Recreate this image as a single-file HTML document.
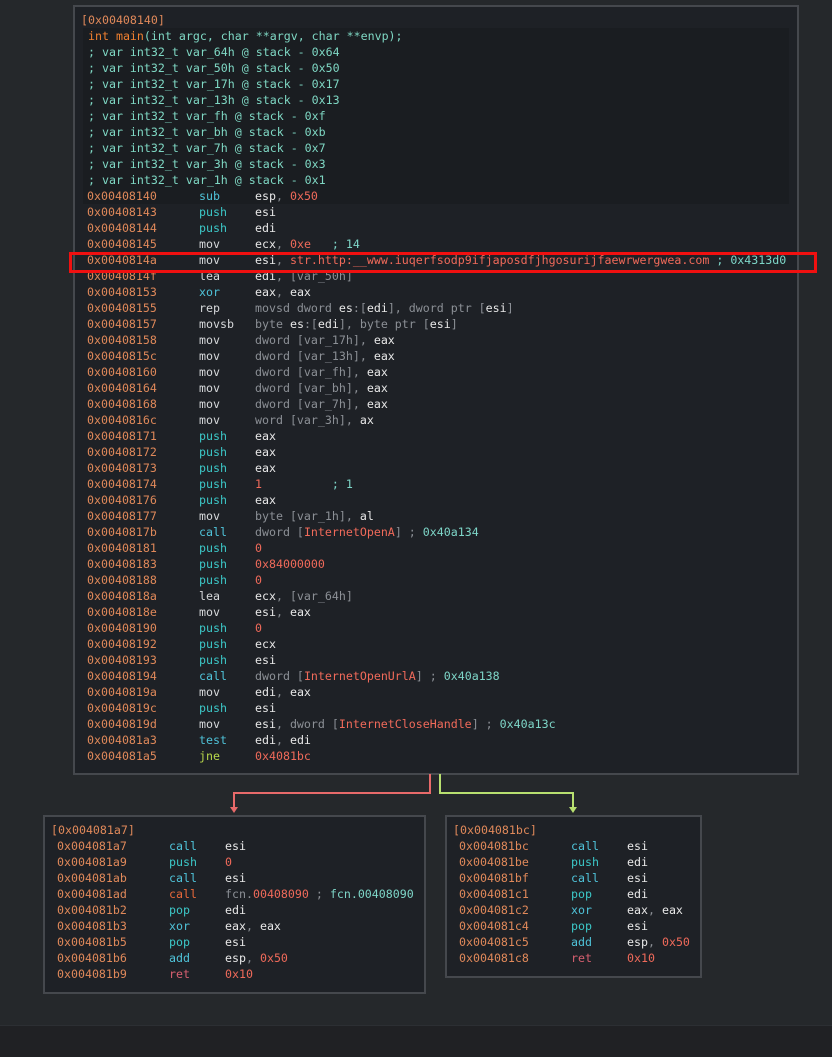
<!DOCTYPE html>
<html><head><meta charset="utf-8"><style>
body{margin:0;width:832px;height:1056px;background:#25282b;position:relative;overflow:hidden;font-family:"DejaVu Sans Mono","Liberation Mono",monospace;font-size:11.62px;}
.box{position:absolute;background:#1e2126;border:2px solid #45484d;box-sizing:border-box;}
.l{position:absolute;height:16px;line-height:16px;white-space:pre;color:#e8e8e8;}
.a{color:#e0895a}.m{color:#d6d8da}.c{color:#4fc3d9}.t{color:#3cc8c8}.r{color:#d86070}.o{color:#e8683a}.g{color:#b8d84a}
.n{color:#f06a5a}.d{color:#8c9096}.k{color:#7ed6c8}.p{color:#e8e8e8}.h{color:#e0895a}
.cm{color:#7fd8c4}.kw{color:#f08030}
</style></head><body>
<div class="box" style="left:73px;top:5px;width:726px;height:770px"></div>
<div style="position:absolute;left:83px;top:28px;width:706px;height:176px;background:#1a1d21"></div>
<div class="box" style="left:43px;top:815px;width:383px;height:179px"></div>
<div class="box" style="left:445px;top:815px;width:257px;height:163px"></div>
<div style="position:absolute;left:429px;top:774px;width:2px;height:20px;background:#e86a6a"></div>
<div style="position:absolute;left:233px;top:792px;width:198px;height:2px;background:#e86a6a"></div>
<div style="position:absolute;left:233px;top:792px;width:2px;height:17px;background:#e86a6a"></div>
<div style="position:absolute;left:230px;top:807px;width:0;height:0;border-left:4px solid transparent;border-right:4px solid transparent;border-top:6px solid #e86a6a"></div>
<div style="position:absolute;left:439px;top:774px;width:2px;height:20px;background:#b8e070"></div>
<div style="position:absolute;left:439px;top:792px;width:135px;height:2px;background:#b8e070"></div>
<div style="position:absolute;left:572px;top:792px;width:2px;height:17px;background:#b8e070"></div>
<div style="position:absolute;left:569px;top:807px;width:0;height:0;border-left:4px solid transparent;border-right:4px solid transparent;border-top:6px solid #b8e070"></div>
<div style="position:absolute;left:0;top:1025px;width:832px;height:31px;background:#202124;border-top:1px solid #2c2f33"></div>

<div class="l h" style="left:81px;top:12px">[0x00408140]</div>
<div class="l" style="left:88px;top:28px"><span class="kw">int main</span><span class="cm">(int argc, char **argv, char **envp);</span></div>
<div class="l cm" style="left:88px;top:44px">; var int32_t var_64h @ stack - 0x64</div>
<div class="l cm" style="left:88px;top:60px">; var int32_t var_50h @ stack - 0x50</div>
<div class="l cm" style="left:88px;top:76px">; var int32_t var_17h @ stack - 0x17</div>
<div class="l cm" style="left:88px;top:92px">; var int32_t var_13h @ stack - 0x13</div>
<div class="l cm" style="left:88px;top:108px">; var int32_t var_fh @ stack - 0xf</div>
<div class="l cm" style="left:88px;top:124px">; var int32_t var_bh @ stack - 0xb</div>
<div class="l cm" style="left:88px;top:140px">; var int32_t var_7h @ stack - 0x7</div>
<div class="l cm" style="left:88px;top:156px">; var int32_t var_3h @ stack - 0x3</div>
<div class="l cm" style="left:88px;top:172px">; var int32_t var_1h @ stack - 0x1</div>

<div style="position:absolute;left:87px;top:188px;">
<div class="l a" style="left:0;top:0">0x00408140</div><div class="l c" style="left:112px;top:0">sub</div><div class="l" style="left:168px;top:0">esp<span class="d">,</span> <span class="n">0x50</span></div>
<div class="l a" style="left:0;top:16px">0x00408143</div><div class="l t" style="left:112px;top:16px">push</div><div class="l" style="left:168px;top:16px">esi</div>
<div class="l a" style="left:0;top:32px">0x00408144</div><div class="l t" style="left:112px;top:32px">push</div><div class="l" style="left:168px;top:32px">edi</div>
<div class="l a" style="left:0;top:48px">0x00408145</div><div class="l m" style="left:112px;top:48px">mov</div><div class="l" style="left:168px;top:48px">ecx<span class="d">,</span> <span class="n">0xe</span>   <span class="k">; 14</span></div>
<div class="l a" style="left:0;top:64px">0x0040814a</div><div class="l m" style="left:112px;top:64px">mov</div><div class="l" style="left:168px;top:64px">esi<span class="d">,</span> <span class="n">str.http:__www.iuqerfsodp9ifjaposdfjhgosurijfaewrwergwea.com</span> <span class="k">; 0x4313d0</span></div>
<div class="l a" style="left:0;top:80px">0x0040814f</div><div class="l m" style="left:112px;top:80px">lea</div><div class="l" style="left:168px;top:80px">edi<span class="d">, [var_50h]</span></div>
<div class="l a" style="left:0;top:96px">0x00408153</div><div class="l c" style="left:112px;top:96px">xor</div><div class="l" style="left:168px;top:96px">eax<span class="d">,</span> eax</div>
<div class="l a" style="left:0;top:112px">0x00408155</div><div class="l m" style="left:112px;top:112px">rep</div><div class="l d" style="left:168px;top:112px">movsd dword <span class="p">es</span>:[<span class="p">edi</span>], dword ptr [<span class="p">esi</span>]</div>
<div class="l a" style="left:0;top:128px">0x00408157</div><div class="l m" style="left:112px;top:128px">movsb</div><div class="l d" style="left:168px;top:128px">byte <span class="p">es</span>:[<span class="p">edi</span>], byte ptr [<span class="p">esi</span>]</div>
<div class="l a" style="left:0;top:144px">0x00408158</div><div class="l m" style="left:112px;top:144px">mov</div><div class="l d" style="left:168px;top:144px">dword [var_17h], <span class="p">eax</span></div>
<div class="l a" style="left:0;top:160px">0x0040815c</div><div class="l m" style="left:112px;top:160px">mov</div><div class="l d" style="left:168px;top:160px">dword [var_13h], <span class="p">eax</span></div>
<div class="l a" style="left:0;top:176px">0x00408160</div><div class="l m" style="left:112px;top:176px">mov</div><div class="l d" style="left:168px;top:176px">dword [var_fh], <span class="p">eax</span></div>
<div class="l a" style="left:0;top:192px">0x00408164</div><div class="l m" style="left:112px;top:192px">mov</div><div class="l d" style="left:168px;top:192px">dword [var_bh], <span class="p">eax</span></div>
<div class="l a" style="left:0;top:208px">0x00408168</div><div class="l m" style="left:112px;top:208px">mov</div><div class="l d" style="left:168px;top:208px">dword [var_7h], <span class="p">eax</span></div>
<div class="l a" style="left:0;top:224px">0x0040816c</div><div class="l m" style="left:112px;top:224px">mov</div><div class="l d" style="left:168px;top:224px">word [var_3h], <span class="p">ax</span></div>
<div class="l a" style="left:0;top:240px">0x00408171</div><div class="l t" style="left:112px;top:240px">push</div><div class="l" style="left:168px;top:240px">eax</div>
<div class="l a" style="left:0;top:256px">0x00408172</div><div class="l t" style="left:112px;top:256px">push</div><div class="l" style="left:168px;top:256px">eax</div>
<div class="l a" style="left:0;top:272px">0x00408173</div><div class="l t" style="left:112px;top:272px">push</div><div class="l" style="left:168px;top:272px">eax</div>
<div class="l a" style="left:0;top:288px">0x00408174</div><div class="l t" style="left:112px;top:288px">push</div><div class="l" style="left:168px;top:288px"><span class="n">1</span>          <span class="k">; 1</span></div>
<div class="l a" style="left:0;top:304px">0x00408176</div><div class="l t" style="left:112px;top:304px">push</div><div class="l" style="left:168px;top:304px">eax</div>
<div class="l a" style="left:0;top:320px">0x00408177</div><div class="l m" style="left:112px;top:320px">mov</div><div class="l d" style="left:168px;top:320px">byte [var_1h], <span class="p">al</span></div>
<div class="l a" style="left:0;top:336px">0x0040817b</div><div class="l c" style="left:112px;top:336px">call</div><div class="l d" style="left:168px;top:336px">dword [<span class="n">InternetOpenA</span>] ; <span class="k">0x40a134</span></div>
<div class="l a" style="left:0;top:352px">0x00408181</div><div class="l t" style="left:112px;top:352px">push</div><div class="l n" style="left:168px;top:352px">0</div>
<div class="l a" style="left:0;top:368px">0x00408183</div><div class="l t" style="left:112px;top:368px">push</div><div class="l n" style="left:168px;top:368px">0x84000000</div>
<div class="l a" style="left:0;top:384px">0x00408188</div><div class="l t" style="left:112px;top:384px">push</div><div class="l n" style="left:168px;top:384px">0</div>
<div class="l a" style="left:0;top:400px">0x0040818a</div><div class="l m" style="left:112px;top:400px">lea</div><div class="l" style="left:168px;top:400px">ecx<span class="d">, [var_64h]</span></div>
<div class="l a" style="left:0;top:416px">0x0040818e</div><div class="l m" style="left:112px;top:416px">mov</div><div class="l" style="left:168px;top:416px">esi<span class="d">,</span> eax</div>
<div class="l a" style="left:0;top:432px">0x00408190</div><div class="l t" style="left:112px;top:432px">push</div><div class="l n" style="left:168px;top:432px">0</div>
<div class="l a" style="left:0;top:448px">0x00408192</div><div class="l t" style="left:112px;top:448px">push</div><div class="l" style="left:168px;top:448px">ecx</div>
<div class="l a" style="left:0;top:464px">0x00408193</div><div class="l t" style="left:112px;top:464px">push</div><div class="l" style="left:168px;top:464px">esi</div>
<div class="l a" style="left:0;top:480px">0x00408194</div><div class="l c" style="left:112px;top:480px">call</div><div class="l d" style="left:168px;top:480px">dword [<span class="n">InternetOpenUrlA</span>] ; <span class="k">0x40a138</span></div>
<div class="l a" style="left:0;top:496px">0x0040819a</div><div class="l m" style="left:112px;top:496px">mov</div><div class="l" style="left:168px;top:496px">edi<span class="d">,</span> eax</div>
<div class="l a" style="left:0;top:512px">0x0040819c</div><div class="l t" style="left:112px;top:512px">push</div><div class="l" style="left:168px;top:512px">esi</div>
<div class="l a" style="left:0;top:528px">0x0040819d</div><div class="l m" style="left:112px;top:528px">mov</div><div class="l" style="left:168px;top:528px">esi<span class="d">, dword [</span><span class="n">InternetCloseHandle</span><span class="d">] ;</span> <span class="k">0x40a13c</span></div>
<div class="l a" style="left:0;top:544px">0x004081a3</div><div class="l c" style="left:112px;top:544px">test</div><div class="l" style="left:168px;top:544px">edi<span class="d">,</span> edi</div>
<div class="l a" style="left:0;top:560px">0x004081a5</div><div class="l g" style="left:112px;top:560px">jne</div><div class="l n" style="left:168px;top:560px">0x4081bc</div>
</div>
<div style="position:absolute;left:69px;top:252px;width:748px;height:21px;border:3px solid #f01010;box-sizing:border-box"></div>

<div class="l h" style="left:51px;top:822px">[0x004081a7]</div>
<div style="position:absolute;left:57px;top:838px">
<div class="l a" style="left:0;top:0">0x004081a7</div><div class="l c" style="left:112px;top:0">call</div><div class="l" style="left:168px;top:0">esi</div>
<div class="l a" style="left:0;top:16px">0x004081a9</div><div class="l t" style="left:112px;top:16px">push</div><div class="l n" style="left:168px;top:16px">0</div>
<div class="l a" style="left:0;top:32px">0x004081ab</div><div class="l c" style="left:112px;top:32px">call</div><div class="l" style="left:168px;top:32px">esi</div>
<div class="l a" style="left:0;top:48px">0x004081ad</div><div class="l o" style="left:112px;top:48px">call</div><div class="l d" style="left:168px;top:48px">fcn.<span class="n">00408090</span> ; <span class="k">fcn.00408090</span></div>
<div class="l a" style="left:0;top:64px">0x004081b2</div><div class="l t" style="left:112px;top:64px">pop</div><div class="l" style="left:168px;top:64px">edi</div>
<div class="l a" style="left:0;top:80px">0x004081b3</div><div class="l c" style="left:112px;top:80px">xor</div><div class="l" style="left:168px;top:80px">eax<span class="d">,</span> eax</div>
<div class="l a" style="left:0;top:96px">0x004081b5</div><div class="l t" style="left:112px;top:96px">pop</div><div class="l" style="left:168px;top:96px">esi</div>
<div class="l a" style="left:0;top:112px">0x004081b6</div><div class="l c" style="left:112px;top:112px">add</div><div class="l" style="left:168px;top:112px">esp<span class="d">,</span> <span class="n">0x50</span></div>
<div class="l a" style="left:0;top:128px">0x004081b9</div><div class="l r" style="left:112px;top:128px">ret</div><div class="l n" style="left:168px;top:128px">0x10</div>
</div>

<div class="l h" style="left:453px;top:822px">[0x004081bc]</div>
<div style="position:absolute;left:459px;top:838px">
<div class="l a" style="left:0;top:0">0x004081bc</div><div class="l c" style="left:112px;top:0">call</div><div class="l" style="left:168px;top:0">esi</div>
<div class="l a" style="left:0;top:16px">0x004081be</div><div class="l t" style="left:112px;top:16px">push</div><div class="l" style="left:168px;top:16px">edi</div>
<div class="l a" style="left:0;top:32px">0x004081bf</div><div class="l c" style="left:112px;top:32px">call</div><div class="l" style="left:168px;top:32px">esi</div>
<div class="l a" style="left:0;top:48px">0x004081c1</div><div class="l t" style="left:112px;top:48px">pop</div><div class="l" style="left:168px;top:48px">edi</div>
<div class="l a" style="left:0;top:64px">0x004081c2</div><div class="l c" style="left:112px;top:64px">xor</div><div class="l" style="left:168px;top:64px">eax<span class="d">,</span> eax</div>
<div class="l a" style="left:0;top:80px">0x004081c4</div><div class="l t" style="left:112px;top:80px">pop</div><div class="l" style="left:168px;top:80px">esi</div>
<div class="l a" style="left:0;top:96px">0x004081c5</div><div class="l c" style="left:112px;top:96px">add</div><div class="l" style="left:168px;top:96px">esp<span class="d">,</span> <span class="n">0x50</span></div>
<div class="l a" style="left:0;top:112px">0x004081c8</div><div class="l r" style="left:112px;top:112px">ret</div><div class="l n" style="left:168px;top:112px">0x10</div>
</div>
</body></html>
